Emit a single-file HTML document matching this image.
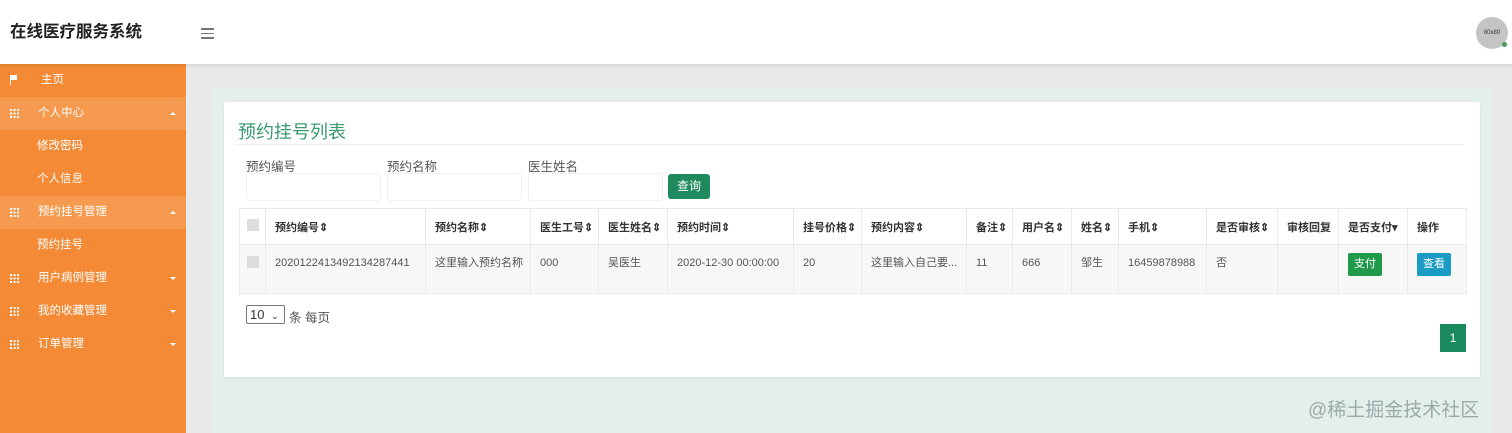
<!DOCTYPE html>
<html><head><meta charset="utf-8"><style>
*{box-sizing:border-box;margin:0;padding:0}
body{width:1512px;height:433px;overflow:hidden;font-family:"Liberation Sans","Noto Sans CJK SC",sans-serif;background:#e9e9e9;position:relative;font-size:12px;color:#333}
.hd{position:absolute;left:0;top:0;width:1512px;height:64px;background:#fff;box-shadow:0 2px 4px rgba(0,0,0,.08);z-index:2}
.logo{position:absolute;left:10px;top:22px;font-size:16.5px;line-height:20px;font-weight:bold;color:#222}
.burger{position:absolute;left:201px;top:28px;width:13px}
.burger i{display:block;height:1.5px;background:#777;margin-bottom:3px}
.av{position:absolute;left:1476px;top:17px;width:32px;height:32px;border-radius:50%;background:#c4c4c4;font-size:6px;text-align:center;line-height:32px;color:#333}
.dot{position:absolute;left:1502px;top:42px;width:5px;height:5px;border-radius:50%;background:#4a9a5a}
.sb{position:absolute;left:0;top:64px;width:186px;height:369px;background:#f48a35}
.mi{height:33px;line-height:33px;color:#fff;font-size:11.5px;position:relative}
.mi.l{background:#f69a4f}
.mi .ic{position:absolute;left:10px;top:12px;width:9px;height:9px;background:
linear-gradient(90deg,#fff 2px,transparent 2px,transparent 3.5px,#fff 3.5px,#fff 5.5px,transparent 5.5px,transparent 7px,#fff 7px);
-webkit-mask:linear-gradient(#000 2px,transparent 2px,transparent 3.5px,#000 3.5px,#000 5.5px,transparent 5.5px,transparent 7px,#000 7px)}
.mi .t{position:absolute;left:38px}
.mi .s{position:absolute;left:37px}
.mi .ar{position:absolute;left:170px;top:15px;width:0;height:0;border-left:3px solid transparent;border-right:3px solid transparent;border-top:3px solid #fff}
.mi .ar.u{border-top:0;border-bottom:3px solid #fff}
.flag{position:absolute;left:10px;top:11px;width:8px;height:10px;border-left:1.5px solid #fff}
.flag::after{content:"";position:absolute;left:0;top:0;width:6px;height:5px;background:#fff}
.mint{position:absolute;left:213px;top:88px;width:1278px;height:345px;background:#e4efeb}
.card{position:absolute;left:224px;top:102px;width:1256px;height:275px;background:#fff;box-shadow:0 1px 3px rgba(0,0,0,.08)}
.ttl{position:absolute;left:14px;top:16px;font-size:18px;color:#3a9a6e}
.hr{position:absolute;left:10px;top:42px;width:1230px;height:1px;background:#eee}
.lab{position:absolute;top:54px;font-size:12.5px;color:#555}
.inp{position:absolute;top:71px;width:135px;height:28px;border:1px solid #f0f0f0;border-radius:3px}
.btn{position:absolute;left:444px;top:72px;width:42px;height:25px;background:#1f8a5e;color:#fff;border-radius:3px;text-align:center;line-height:25px;font-size:12px}
table{position:absolute;left:15px;top:106px;border-collapse:collapse;table-layout:fixed;width:1227px}
td,th{border:1px solid #eaeaea;padding:0 9px;text-align:left;white-space:nowrap;overflow:hidden;font-size:11px}
th{height:36px;font-weight:bold;color:#333}
td{height:49px;background:#f7f7f7;color:#555;vertical-align:top;padding-top:11px;line-height:14px}
.cb{display:inline-block;width:12px;height:12px;background:#ddd}
.b{display:inline-block;color:#fff;padding:0 6px;height:23px;line-height:23px;border-radius:2px;margin-top:-3px}
.sel{position:absolute;left:22px;top:203px;width:39px;height:19px;border:1px solid #777;border-radius:2px;font-size:13px;line-height:17px;padding-left:3px}
.pg{position:absolute;left:1216px;top:222px;width:26px;height:28px;background:#1a8a5e;color:#fff;text-align:center;line-height:28px;font-size:12px}
.wm{position:absolute;left:1308px;top:395px;font-size:19px;color:#9aa}
</style></head><body>
<div class="hd"><div class="logo">在线医疗服务系统</div><div class="burger"><i></i><i></i><i></i></div><div class="av">80x80</div><div class="dot"></div></div>
<div class="sb">
<div class="mi"><span class="flag"></span><span class="t" style="left:41px">主页</span></div>
<div class="mi l"><span class="ic"></span><span class="t">个人中心</span><span class="ar u"></span></div>
<div class="mi"><span class="s">修改密码</span></div>
<div class="mi"><span class="s">个人信息</span></div>
<div class="mi l"><span class="ic"></span><span class="t">预约挂号管理</span><span class="ar u"></span></div>
<div class="mi"><span class="s">预约挂号</span></div>
<div class="mi"><span class="ic"></span><span class="t">用户病例管理</span><span class="ar"></span></div>
<div class="mi"><span class="ic"></span><span class="t">我的收藏管理</span><span class="ar"></span></div>
<div class="mi"><span class="ic"></span><span class="t">订单管理</span><span class="ar"></span></div>
</div>
<div class="mint"></div>
<div class="card">
<div class="ttl">预约挂号列表</div><div class="hr"></div>
<div class="lab" style="left:22px">预约编号</div><div class="lab" style="left:163px">预约名称</div><div class="lab" style="left:304px">医生姓名</div>
<div class="inp" style="left:22px"></div><div class="inp" style="left:163px"></div><div class="inp" style="left:304px"></div>
<div class="btn">查询</div>
<table>
<colgroup><col style="width:26px"><col style="width:160px"><col style="width:105px"><col style="width:68px"><col style="width:69px"><col style="width:126px"><col style="width:68px"><col style="width:105px"><col style="width:46px"><col style="width:59px"><col style="width:47px"><col style="width:88px"><col style="width:71px"><col style="width:61px"><col style="width:69px"><col style="width:59px"></colgroup>
<tr><th style="padding:0 7px"><span class="cb"></span></th><th>预约编号⇕</th><th>预约名称⇕</th><th>医生工号⇕</th><th>医生姓名⇕</th><th>预约时间⇕</th><th>挂号价格⇕</th><th>预约内容⇕</th><th>备注⇕</th><th>用户名⇕</th><th>姓名⇕</th><th>手机⇕</th><th>是否审核⇕</th><th>审核回复</th><th>是否支付▾</th><th>操作</th></tr>
<tr><td style="padding:11px 7px 0"><span class="cb"></span></td><td>20201224134921342874​41</td><td>这里输入预约名称</td><td>000</td><td>吴医生</td><td>2020-12-30 00:00:00</td><td>20</td><td>这里输入自己要...</td><td>11</td><td>666</td><td>邹生</td><td>16459878988</td><td>否</td><td></td><td><span class="b" style="background:#1f9a4a">支付</span></td><td><span class="b" style="background:#1a9bc4">查看</span></td></tr>
</table>
<div class="sel">10 <span style="font-size:9px;margin-left:3px">⌄</span></div>
<div style="position:absolute;left:65px;top:205px;font-size:12.5px;color:#555">条 每页</div>
<div class="pg">1</div>
</div>
<div class="wm">@稀土掘金技术社区</div>
</body></html>
